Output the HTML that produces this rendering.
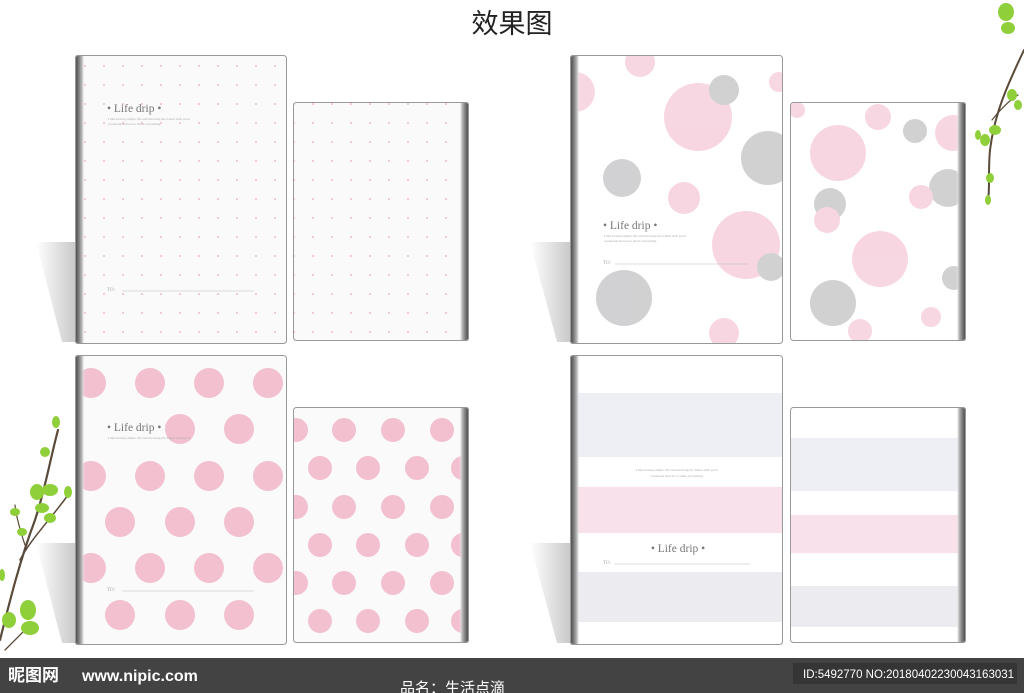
<!DOCTYPE html>
<html><head><meta charset="utf-8"><style>
html,body{margin:0;padding:0;background:#fff;}
svg{display:block}
</style></head><body>
<svg width="1024" height="693" viewBox="0 0 1024 693" xmlns="http://www.w3.org/2000/svg" font-family="Liberation Serif, serif">
<defs>
<pattern id="dots" x="0" y="0" width="19" height="19" patternUnits="userSpaceOnUse">
<circle cx="9" cy="9" r="0.9" fill="#f0a8c0"/>
</pattern>
<linearGradient id="spL" x1="0" x2="1"><stop offset="0" stop-color="#444"/><stop offset="0.35" stop-color="#777"/><stop offset="0.7" stop-color="#bbb"/><stop offset="1" stop-color="#fff" stop-opacity="0"/></linearGradient>
<linearGradient id="spR" x1="1" x2="0"><stop offset="0" stop-color="#444"/><stop offset="0.35" stop-color="#777"/><stop offset="0.7" stop-color="#bbb"/><stop offset="1" stop-color="#fff" stop-opacity="0"/></linearGradient>
<linearGradient id="sh" x1="0" x2="1"><stop offset="0" stop-color="#fff"/><stop offset="1" stop-color="#c8c8c8"/></linearGradient>
<clipPath id="c1"><rect x="75" y="55" width="212" height="289" rx="3"/></clipPath>
<clipPath id="c2"><rect x="293" y="102" width="176" height="239" rx="3"/></clipPath>
<clipPath id="c3"><rect x="75" y="355" width="212" height="290" rx="3"/></clipPath>
<clipPath id="c4"><rect x="293" y="407" width="176" height="236" rx="3"/></clipPath>
<clipPath id="c5"><rect x="570" y="55" width="213" height="289" rx="3"/></clipPath>
<clipPath id="c6"><rect x="790" y="102" width="176" height="239" rx="3"/></clipPath>
<clipPath id="c7"><rect x="570" y="355" width="213" height="290" rx="3"/></clipPath>
<clipPath id="c8"><rect x="790" y="407" width="176" height="236" rx="3"/></clipPath>
</defs>
<text x="512" y="33" text-anchor="middle" font-family="Liberation Sans, Noto Sans CJK SC, sans-serif" font-size="27" fill="#222">效果图</text>

<!-- shadows -->
<polygon points="36,242 76,242 76,342 62,342" fill="url(#sh)"/>
<polygon points="36,543 76,543 76,643 62,643" fill="url(#sh)"/>
<polygon points="530,242 571,242 571,342 557,342" fill="url(#sh)"/>
<polygon points="530,543 571,543 571,643 557,643" fill="url(#sh)"/>

<!-- Book 1 -->
<g clip-path="url(#c1)">
<rect x="75" y="55" width="212" height="289" fill="#fafafa"/>
<rect x="75" y="55" width="212" height="289" fill="url(#dots)"/>
<rect x="75" y="55" width="10" height="289" fill="url(#spL)"/>
</g>
<rect x="75.5" y="55.5" width="211" height="288" rx="3" fill="none" stroke="#999"/>
<text x="107" y="112" font-size="11.5" fill="#777">• Life drip •</text>
<text x="108" y="120" font-size="3.5" fill="#aaa">I like having simple life and knowing the friend with good</text>
<text x="108" y="125" font-size="3.5" fill="#aaa">weekends heaven to share everything.</text>
<text x="107" y="291" font-size="5" fill="#aaa">TO:</text>
<line x1="122" y1="291" x2="254" y2="291" stroke="#bbb" stroke-width="0.6"/>

<!-- Book 2 -->
<g clip-path="url(#c2)">
<rect x="293" y="102" width="176" height="239" fill="#fafafa"/>
<rect x="293" y="102" width="176" height="239" fill="url(#dots)"/>
<rect x="459" y="102" width="10" height="239" fill="url(#spR)"/>
</g>
<rect x="293.5" y="102.5" width="175" height="238" rx="3" fill="none" stroke="#999"/>

<!-- Book 3 -->
<g clip-path="url(#c3)">
<rect x="75" y="355" width="212" height="290" fill="#fafafa"/>
<g fill="#f2c0cf">
<circle cx="91" cy="383" r="15"/><circle cx="150" cy="383" r="15"/><circle cx="209" cy="383" r="15"/><circle cx="268" cy="383" r="15"/>
<circle cx="180" cy="429" r="15"/><circle cx="239" cy="429" r="15"/>
<circle cx="91" cy="476" r="15"/><circle cx="150" cy="476" r="15"/><circle cx="209" cy="476" r="15"/><circle cx="268" cy="476" r="15"/>
<circle cx="120" cy="522" r="15"/><circle cx="180" cy="522" r="15"/><circle cx="239" cy="522" r="15"/>
<circle cx="91" cy="568" r="15"/><circle cx="150" cy="568" r="15"/><circle cx="209" cy="568" r="15"/><circle cx="268" cy="568" r="15"/>
<circle cx="120" cy="615" r="15"/><circle cx="180" cy="615" r="15"/><circle cx="239" cy="615" r="15"/>
</g>
<rect x="75" y="355" width="10" height="290" fill="url(#spL)"/>
</g>
<rect x="75.5" y="355.5" width="211" height="289" rx="3" fill="none" stroke="#999"/>
<text x="107" y="431" font-size="11.5" fill="#777">• Life drip •</text>
<text x="108" y="439" font-size="3.5" fill="#aaa">I like having simple life and knowing the friend with good</text>
<text x="107" y="591" font-size="5" fill="#aaa">TO:</text>
<line x1="122" y1="591" x2="254" y2="591" stroke="#bbb" stroke-width="0.6"/>

<!-- Book 4 -->
<g clip-path="url(#c4)">
<rect x="293" y="407" width="176" height="236" fill="#fafafa"/>
<g fill="#f2c0cf">
<circle cx="296" cy="430" r="12"/><circle cx="344" cy="430" r="12"/><circle cx="393" cy="430" r="12"/><circle cx="442" cy="430" r="12"/>
<circle cx="320" cy="468" r="12"/><circle cx="368" cy="468" r="12"/><circle cx="417" cy="468" r="12"/><circle cx="463" cy="468" r="12"/>
<circle cx="296" cy="507" r="12"/><circle cx="344" cy="507" r="12"/><circle cx="393" cy="507" r="12"/><circle cx="442" cy="507" r="12"/>
<circle cx="320" cy="545" r="12"/><circle cx="368" cy="545" r="12"/><circle cx="417" cy="545" r="12"/><circle cx="463" cy="545" r="12"/>
<circle cx="296" cy="583" r="12"/><circle cx="344" cy="583" r="12"/><circle cx="393" cy="583" r="12"/><circle cx="442" cy="583" r="12"/>
<circle cx="320" cy="621" r="12"/><circle cx="368" cy="621" r="12"/><circle cx="417" cy="621" r="12"/><circle cx="463" cy="621" r="12"/>
</g>
<rect x="459" y="407" width="10" height="236" fill="url(#spR)"/>
</g>
<rect x="293.5" y="407.5" width="175" height="235" rx="3" fill="none" stroke="#999"/>

<!-- Book 5 -->
<g clip-path="url(#c5)">
<rect x="570" y="55" width="213" height="289" fill="#fff"/>
<g opacity="0.85">
<circle cx="575" cy="92" r="20" fill="#f6d0dc"/>
<circle cx="640" cy="62" r="15" fill="#f6d0dc"/>
<circle cx="698" cy="117" r="34" fill="#f6d0dc"/>
<circle cx="724" cy="90" r="15" fill="#c9c9cb"/>
<circle cx="779" cy="82" r="10" fill="#f6d0dc"/>
<circle cx="622" cy="178" r="19" fill="#c9c9cb"/>
<circle cx="684" cy="198" r="16" fill="#f6d0dc"/>
<circle cx="768" cy="158" r="27" fill="#c9c9cb"/>
<circle cx="746" cy="245" r="34" fill="#f6d0dc"/>
<circle cx="771" cy="267" r="14" fill="#c9c9cb"/>
<circle cx="624" cy="298" r="28" fill="#c9c9cb"/>
<circle cx="724" cy="333" r="15" fill="#f6d0dc"/>
</g>
<rect x="570" y="55" width="10" height="289" fill="url(#spL)"/>
</g>
<rect x="570.5" y="55.5" width="212" height="288" rx="3" fill="none" stroke="#999"/>
<text x="603" y="229" font-size="11.5" fill="#777">• Life drip •</text>
<text x="604" y="237" font-size="3.5" fill="#aaa">I like having simple life and knowing the friend with good</text>
<text x="604" y="242" font-size="3.5" fill="#aaa">weekends heaven to share everything.</text>
<text x="603" y="264" font-size="5" fill="#aaa">TO:</text>
<line x1="615" y1="264" x2="749" y2="264" stroke="#bbb" stroke-width="0.6"/>

<!-- Book 6 -->
<g clip-path="url(#c6)">
<rect x="790" y="102" width="176" height="239" fill="#fff"/>
<g opacity="0.85">
<circle cx="797" cy="110" r="8" fill="#f6d0dc"/>
<circle cx="838" cy="153" r="28" fill="#f6d0dc"/>
<circle cx="878" cy="117" r="13" fill="#f6d0dc"/>
<circle cx="915" cy="131" r="12" fill="#c9c9cb"/>
<circle cx="953" cy="133" r="18" fill="#f6d0dc"/>
<circle cx="948" cy="188" r="19" fill="#c9c9cb"/>
<circle cx="830" cy="204" r="16" fill="#c9c9cb"/>
<circle cx="827" cy="220" r="13" fill="#f6d0dc"/>
<circle cx="921" cy="197" r="12" fill="#f6d0dc"/>
<circle cx="880" cy="259" r="28" fill="#f6d0dc"/>
<circle cx="954" cy="278" r="12" fill="#c9c9cb"/>
<circle cx="833" cy="303" r="23" fill="#c9c9cb"/>
<circle cx="931" cy="317" r="10" fill="#f6d0dc"/>
<circle cx="860" cy="331" r="12" fill="#f6d0dc"/>
</g>
<rect x="956" y="102" width="10" height="239" fill="url(#spR)"/>
</g>
<rect x="790.5" y="102.5" width="175" height="238" rx="3" fill="none" stroke="#999"/>

<!-- Book 7 -->
<g clip-path="url(#c7)">
<rect x="570" y="355" width="213" height="290" fill="#fff"/>
<rect x="570" y="393" width="213" height="64" fill="#eeeff4"/>
<rect x="570" y="487" width="213" height="46" fill="#f8e1ea"/>
<rect x="570" y="572" width="213" height="50" fill="#ececf0"/>
<rect x="570" y="355" width="10" height="290" fill="url(#spL)"/>
</g>
<rect x="570.5" y="355.5" width="212" height="289" rx="3" fill="none" stroke="#999"/>
<text x="677" y="471" text-anchor="middle" font-size="3.5" fill="#aaa">I like having simple life and knowing the friend with good</text>
<text x="677" y="477" text-anchor="middle" font-size="3.5" fill="#aaa">weekends heaven to share everything.</text>
<text x="678" y="552" text-anchor="middle" font-size="11.5" fill="#777">• Life drip •</text>
<text x="603" y="564" font-size="5" fill="#aaa">TO:</text>
<line x1="614" y1="564" x2="750" y2="564" stroke="#bbb" stroke-width="0.6"/>

<!-- Book 8 -->
<g clip-path="url(#c8)">
<rect x="790" y="407" width="176" height="236" fill="#fff"/>
<rect x="790" y="438" width="176" height="53" fill="#eeeff4"/>
<rect x="790" y="515" width="176" height="38" fill="#f8e1ea"/>
<rect x="790" y="586" width="176" height="41" fill="#ececf0"/>
<rect x="956" y="407" width="10" height="236" fill="url(#spR)"/>
</g>
<rect x="790.5" y="407.5" width="175" height="235" rx="3" fill="none" stroke="#999"/>

<!-- branches -->
<g stroke="#5a4a3a" fill="none" stroke-linecap="round">
<path d="M0,640 C10,600 20,560 35,520 C45,490 50,460 58,430" stroke-width="2.2"/>
<path d="M20,560 C30,540 50,520 68,495" stroke-width="1.5"/>
<path d="M25,545 C20,530 16,515 15,505" stroke-width="1.2"/>
<path d="M5,650 C15,640 25,630 30,625" stroke-width="1.3"/>
<path d="M1024,50 C1010,80 995,110 990,150 C988,170 990,190 988,200" stroke-width="2"/>
<path d="M992,120 C1000,110 1010,100 1018,95" stroke-width="1.2"/>
</g>
<g fill="#8fcf3a">
<ellipse cx="50" cy="490" rx="8" ry="6"/><ellipse cx="37" cy="492" rx="7" ry="8"/>
<ellipse cx="42" cy="508" rx="7" ry="5"/><ellipse cx="50" cy="518" rx="6" ry="5"/>
<ellipse cx="15" cy="512" rx="5" ry="4"/><ellipse cx="22" cy="532" rx="5" ry="4"/>
<ellipse cx="45" cy="452" rx="5" ry="5"/><ellipse cx="56" cy="422" rx="4" ry="6"/>
<ellipse cx="68" cy="492" rx="4" ry="6"/>
<ellipse cx="28" cy="610" rx="8" ry="10"/><ellipse cx="9" cy="620" rx="7" ry="8"/><ellipse cx="30" cy="628" rx="9" ry="7"/>
<ellipse cx="2" cy="575" rx="3" ry="6"/>
<ellipse cx="1006" cy="12" rx="8" ry="9"/><ellipse cx="1008" cy="28" rx="7" ry="6"/>
<ellipse cx="995" cy="130" rx="6" ry="5"/><ellipse cx="985" cy="140" rx="5" ry="6"/>
<ellipse cx="1012" cy="95" rx="5" ry="6"/><ellipse cx="1018" cy="105" rx="4" ry="5"/>
<ellipse cx="990" cy="178" rx="4" ry="5"/><ellipse cx="988" cy="200" rx="3" ry="5"/>
<ellipse cx="978" cy="135" rx="3" ry="5"/>
</g>

<!-- footer -->
<rect x="0" y="658" width="1024" height="35" fill="#434343"/>
<text x="8" y="681" font-family="Liberation Sans, Noto Sans CJK SC, sans-serif" font-size="17" font-weight="bold" fill="#fff">昵图网</text>
<text x="82" y="681" font-family="Liberation Sans, sans-serif" font-size="16" font-weight="bold" fill="#fff">www.nipic.com</text>
<rect x="793" y="663" width="224" height="21" fill="#353535"/>
<text x="803" y="678" font-family="Liberation Sans, sans-serif" font-size="11.5" fill="#fff">ID:5492770 NO:20180402230043163031</text>
<text x="400" y="693" font-family="Liberation Sans, Noto Sans CJK SC, sans-serif" font-size="15" fill="#fff">品名：生活点滴</text>
</svg>
</body></html>
